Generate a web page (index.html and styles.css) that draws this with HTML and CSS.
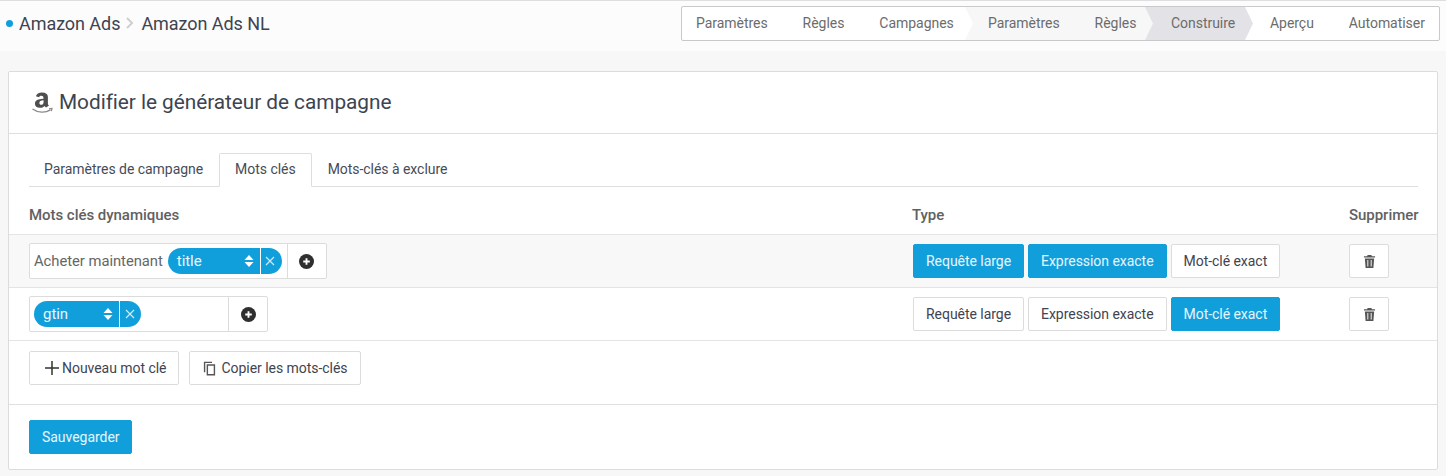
FILE: index.html
```html
<!DOCTYPE html>
<html lang="fr">
<head>
<meta charset="utf-8">
<title>Modifier le générateur de campagne</title>
<link rel="stylesheet" href="styles.css">
</head>
<body>
<header class="topbar">
  <div class="crumbs">
    <span class="dot"></span>
    <span>Amazon Ads</span>
    <svg class="crumb-sep" width="10" height="14" viewBox="0 0 10 14"><path d="M2 2l5 5-5 5" fill="none" stroke="#cfcfcf" stroke-width="2"/></svg>
    <span>Amazon Ads NL</span>
  </div>
  <nav class="steps">
    <div class="group group-first">
      <a class="step">Paramètres</a><a class="step">Règles</a><a class="step">Campagnes</a>
    </div>
    <div class="group group-second">
      <a class="step">Paramètres</a><a class="step">Règles</a>
    </div>
    <div class="group group-current">
      <a class="step">Construire</a>
    </div>
    <div class="group group-last">
      <a class="step">Aperçu</a><a class="step">Automatiser</a>
    </div>
  </nav>
</header>

<main class="card">
  <div class="card-head">
    <svg class="logo" width="22" height="24" viewBox="0 0 22 24"><g transform="translate(-3.500 1.500) scale(1.200 1.020)"><path fill="#4f4f4f" fill-rule="evenodd" d="M7 4.600C7.500 2.400 9.400 1 12 1c3.300 0 5 1.500 5 4.500v6.200c0 .9.300 1.400.9 2.100l-2.400 2c-.6-.6-1-1.100-1.300-1.700-1 1.200-2.200 1.800-3.900 1.800-2.500 0-4.100-1.500-4.100-3.900 0-3.200 2.500-4.500 7.100-4.800v-1c0-1.300-.6-2.100-1.900-2.100-1 0-1.600.6-1.800 1.600zM13.400 8.700c-2.400.2-3.500 1-3.500 2.600 0 1.100.6 1.800 1.500 1.800 1.300 0 2-1 2-2.800z"/></g><path d="M1.500 19c5.500 4 13 4 18 .8" fill="none" stroke="#8a8a8a" stroke-width="1.400"/><path d="M18 18.800l3-.4-.6 2.800" fill="none" stroke="#8a8a8a" stroke-width="1.200"/></svg>
    <h1 class="title">Modifier le générateur de campagne</h1>
  </div>

  <div class="tabs-wrap">
    <div class="tabs">
      <a class="tab">Paramètres de campagne</a>
      <a class="tab tab-active">Mots clés</a>
      <a class="tab">Mots-clés à exclure</a>
    </div>
  </div>

  <div class="row row-head">
    <div>Mots clés dynamiques</div>
    <div>Type</div>
    <div>Supprimer</div>
  </div>

  <div class="row row-body row-shaded">
    <div class="kw">
      <div class="kw-field">
        <span class="kw-text">Acheter maintenant</span>
        <span class="pill pill-title">
          <span class="pill-main"><span>title</span><svg class="sort" width="10" height="14" viewBox="0 0 10 14"><path fill="#fff" d="M5 1l4.500 5h-9zM5 13L.5 8h9z"/></svg></span>
          <span class="pill-x"><svg width="10" height="10" viewBox="0 0 10 10"><path d="M1 1l8 8M9 1l-8 8" stroke="#d5ecf8" stroke-width="1.100"/></svg></span>
        </span>
      </div>
      <div class="kw-add"><svg width="15" height="15" viewBox="0 0 16 16"><circle cx="8" cy="8" r="8" fill="#2f2f2f"/><path d="M8 4.500v7M4.500 8h7" stroke="#fff" stroke-width="2"/></svg></div>
    </div>
    <div class="types">
      <button class="btn btn-on">Requête large</button>
      <button class="btn btn-on">Expression exacte</button>
      <button class="btn">Mot-clé exact</button>
    </div>
    <div><button class="btn btn-trash"><svg width="13" height="15" viewBox="0 0 14 15"><path fill="#555" d="M5 .5h4l.6 1.300H13v1.500H1V1.800h3.400zM2 4.300h10L11.200 14.500H2.800zM4.700 6v7h1V6zm3.600 0v7h1V6z"/></svg></button></div>
  </div>

  <div class="row row-body">
    <div class="kw">
      <div class="kw-field kw-field-wide">
        <span class="pill pill-gtin">
          <span class="pill-main"><span>gtin</span><svg class="sort" width="10" height="14" viewBox="0 0 10 14"><path fill="#fff" d="M5 1l4.500 5h-9zM5 13L.5 8h9z"/></svg></span>
          <span class="pill-x"><svg width="10" height="10" viewBox="0 0 10 10"><path d="M1 1l8 8M9 1l-8 8" stroke="#d5ecf8" stroke-width="1.100"/></svg></span>
        </span>
      </div>
      <div class="kw-add"><svg width="15" height="15" viewBox="0 0 16 16"><circle cx="8" cy="8" r="8" fill="#2f2f2f"/><path d="M8 4.500v7M4.500 8h7" stroke="#fff" stroke-width="2"/></svg></div>
    </div>
    <div class="types">
      <button class="btn">Requête large</button>
      <button class="btn">Expression exacte</button>
      <button class="btn btn-on">Mot-clé exact</button>
    </div>
    <div><button class="btn btn-trash"><svg width="13" height="15" viewBox="0 0 14 15"><path fill="#555" d="M5 .5h4l.6 1.300H13v1.500H1V1.800h3.400zM2 4.300h10L11.200 14.500H2.800zM4.700 6v7h1V6zm3.600 0v7h1V6z"/></svg></button></div>
  </div>

  <div class="actions">
    <button class="btn btn-new"><svg width="14" height="14" viewBox="0 0 14 14"><path d="M7 0v14M0 7h14" stroke="#333" stroke-width="1.500"/></svg>Nouveau mot clé</button>
    <button class="btn btn-copy"><svg width="13" height="15" viewBox="0 0 14 15"><path fill="none" stroke="#555" stroke-width="1.500" d="M4.700 3.700h7.600v10.600H4.700zM1.700 11.500V.9h8"/></svg>Copier les mots-clés</button>
  </div>

  <div class="foot">
    <button class="btn btn-on btn-save">Sauvegarder</button>
  </div>
</main>
</body>
</html>
```
FILE: styles.css
```css
* { box-sizing: border-box; }
html, body { height: 100%; }
body {
  margin: 0;
  background: #f7f7f7;
  color: #444;
  font-family: Roboto, "Liberation Sans", sans-serif;
  font-size: 14px;
  letter-spacing: -0.04px;
  overflow: hidden;
}
.topbar {
  height: 51px;
  background: #fcfcfc;
  border-top: 1px solid #dedede;
  display: flex;
  align-items: center;
  justify-content: space-between;
  padding: 0 6px 5px 6px;
}
.crumbs {
  display: flex;
  align-items: center;
  padding-bottom: 1px;
  font-size: 18px;
  letter-spacing: -0.06px;
  color: #3d4451;
}
.dot {
  width: 7px;
  height: 7px;
  border-radius: 50%;
  background: #119fdc;
  margin-right: 6px;
}
.crumb-sep { margin: 0 6px 0 5px; }
.steps {
  display: flex;
  width: 759px;
  height: 35px;
  border: 1px solid #c9c9c9;
  border-radius: 2px;
  background: #fff;
  color: #6c6c6c;
}
.group {
  display: flex;
  align-items: center;
  gap: 35px;
  position: relative;
  height: 100%;
  padding-bottom: 1px;
}
.group-first { padding-left: 14px; width: 283px; }
.group-second { background: #f7f7f8; padding-left: 23px; width: 180px; }
.group-current { background: #e3e3e7; padding-left: 26px; width: 100px; }
.group-last { padding-left: 25px; flex: 1; }
.group-first::after, .group-second::after, .group-current::after {
  content: "";
  position: absolute;
  top: 0;
  bottom: 0;
  right: -8px;
  width: 8px;
  clip-path: polygon(0 0, 100% 50%, 0 100%);
  z-index: 1;
}
.group-first::after { background: #fff; }
.group-second::after { background: #f7f7f8; }
.group-current::after { background: #e3e3e7; }
.step { white-space: nowrap; }

.card {
  margin: 20px 8px 0;
  height: 399px;
  background: #fff;
  border: 1px solid #dcdcdc;
  border-radius: 2px;
}
.card-head {
  height: 62px;
  border-bottom: 1px solid #dedede;
  display: flex;
  align-items: center;
  padding: 0 0 1px 22px;
  gap: 6px;
}
.title {
  margin: 0;
  font-size: 20.8px;
  font-weight: 400;
  color: #3d4451;
}
.logo { flex: none; }
.tabs-wrap { padding: 19px 19px 0 20px; }
.tabs {
  display: flex;
  height: 34px;
  border-bottom: 1px solid #dedede;
}
.tab {
  height: 34px;
  padding: 7px 15px 0;
  color: #474c57;
  border: 1px solid transparent;
  white-space: nowrap;
}
.tab:first-child { margin-left: -1px; }
.tab-active {
  background: #fff;
  border-color: #dedede;
  border-bottom-color: #fff;
  border-radius: 2px 2px 0 0;
}
.row {
  display: grid;
  grid-template-columns: 1fr 437px 69px;
  padding: 0 19px 0 20px;
  align-items: center;
}
.row-head {
  height: 48px;
  font-size: 15px;
  font-weight: 500;
  color: #616161;
  padding-top: 9px;
  border-bottom: 1px solid #e4e4e4;
}
.row-body {
  height: 53px;
  border-bottom: 1px solid #e4e4e4;
}
.row-shaded { background: #f8f8f8; }
.kw {
  display: inline-flex;
  height: 36px;
  width: max-content;
  background: #fff;
  border: 1px solid #dcdcdc;
  border-radius: 2px;
}
.kw-field {
  display: flex;
  align-items: center;
  padding-left: 4px;
  padding-right: 5px;
  gap: 5px;
  color: #666;
}
.kw-text { font-size: 14.8px; }
.kw-field-wide { width: 198px; }
.kw-add {
  width: 39px;
  border-left: 1px solid #dcdcdc;
  display: flex;
  align-items: center;
  justify-content: center;
}
.pill {
  display: inline-flex;
  height: 26px;
  border-radius: 13px;
  background: #119fdc;
  color: #eaf6fc;
  overflow: hidden;
}
.pill-main {
  display: flex;
  align-items: center;
  justify-content: space-between;
  padding: 0 6px 0 9px;
  font-size: 15px;
  font-weight: 400;
}
.pill-title .pill-main { width: 92px; }
.pill-gtin .pill-main { width: 85px; }
.pill-x {
  width: 22px;
  border-left: 1px solid #fff;
  display: flex;
  align-items: center;
  justify-content: center;
  padding-right: 2px;
}
.sort { display: block; }
.types {
  display: flex;
  gap: 4px;
  padding-left: 1px;
}
.btn {
  height: 34px;
  padding: 0 12px;
  background: #fff;
  border: 1px solid #dcdcdc;
  border-radius: 2px;
  color: #3f4450;
  font-family: inherit;
  font-size: 14px;
  letter-spacing: inherit;
  display: inline-flex;
  align-items: center;
  white-space: nowrap;
}
.btn-on {
  background: #119fdc;
  border-color: #119fdc;
  color: #e8f5fb;
}
.btn-trash {
  width: 40px;
  justify-content: center;
  padding: 0;
}
.actions {
  height: 64px;
  display: flex;
  gap: 10px;
  padding: 10px 20px 0;
  border-bottom: 1px solid #e0e0e0;
}
.btn-new { padding: 0 12px 0 15px; gap: 3px; }
.btn-copy { padding: 0 12px 0 13px; gap: 5px; }
.foot { padding: 15px 20px 0; }
```
